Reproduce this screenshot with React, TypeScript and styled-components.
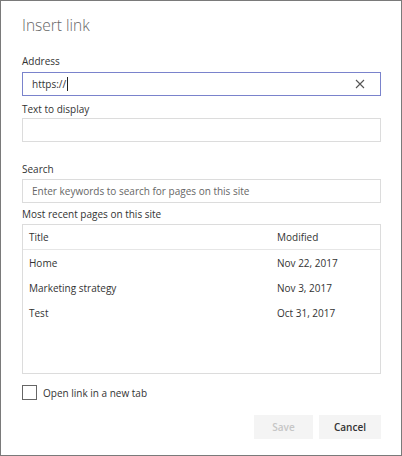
import React from 'react';
import styled, { createGlobalStyle } from 'styled-components';

const GlobalStyle = createGlobalStyle`
  html, body {
    margin: 0;
    padding: 0;
    background: #ffffff;
  }
  * {
    box-sizing: border-box;
  }
`;

const Dialog = styled.div`
  width: 402px;
  height: 456px;
  border: 1px solid #7a7a7a;
  padding: 0 20px 0 21px;
  font-family: "Open Sans", "Noto Sans", sans-serif;
  color: #333333;
  background: #ffffff;
  display: flex;
  flex-direction: column;
`;

const Title = styled.h1`
  margin: 14px 0 0 0;
  font-size: 15.5px;
  line-height: 20px;
  font-weight: 300;
  color: #666666;
`;

const Label = styled.label<{ $top: number; $gap: number }>`
  display: block;
  margin-top: ${p => p.$top}px;
  margin-bottom: ${p => p.$gap}px;
  font-size: 10px;
  line-height: 14px;
  color: #333333;
`;

const InputBox = styled.div<{ $focused?: boolean }>`
  height: 24px;
  border: 1px solid ${p => (p.$focused ? '#7a83cc' : '#dcdcdc')};
  display: flex;
  align-items: center;
  padding: 0 15px 0 9px;
  font-size: 10px;
`;

const Value = styled.span`
  color: #333333;
  flex: 1;
  display: flex;
  align-items: center;
`;

const Caret = styled.span`
  display: inline-block;
  width: 1px;
  height: 14px;
  margin-left: 1px;
  background: #222222;
`;

const Placeholder = styled.span`
  color: #666666;
`;

const ClearButton = styled.span`
  width: 10px;
  height: 10px;
  display: flex;
`;

const Table = styled.div`
  height: 150px;
  border: 1px solid #dcdcdc;
`;

const Row = styled.div<{ $header?: boolean }>`
  display: grid;
  grid-template-columns: 1fr 109px;
  height: ${p => (p.$header ? '25px' : '25px')};
  align-items: center;
  font-size: 10px;
  color: #333333;
  border-bottom: ${p => (p.$header ? '1px solid #e6e6e6' : 'none')};
`;

const Cell = styled.span`
  padding-left: 6px;
`;

const CheckRow = styled.label`
  display: flex;
  align-items: center;
  gap: 6px;
  margin-top: 11px;
  font-size: 10px;
  color: #333333;
`;

const Box = styled.span`
  width: 15px;
  height: 15px;
  border: 1px solid #666666;
`;

const Actions = styled.div`
  display: flex;
  justify-content: flex-end;
  gap: 6px;
  margin-top: 15px;
`;

const Button = styled.button<{ $primary?: boolean; $width: number }>`
  width: ${p => p.$width}px;
  height: 24px;
  border: none;
  background: #f4f4f4;
  font-family: inherit;
  font-size: 10px;
  font-weight: 600;
  color: ${p => (p.$primary ? '#c6c6c6' : '#333333')};
  padding: 0;
`;

const pages = [
  { title: 'Home', modified: 'Nov 22, 2017' },
  { title: 'Marketing strategy', modified: 'Nov 3, 2017' },
  { title: 'Test', modified: 'Oct 31, 2017' },
];

export default function App() {
  return (
    <>
      <GlobalStyle />
      <Dialog>
        <Title>Insert link</Title>

        <Label $top={19} $gap={4}>Address</Label>
        <InputBox $focused>
          <Value>
            https://
            <Caret />
          </Value>
          <ClearButton>
            <svg width="10" height="10" viewBox="0 0 10 10">
              <path d="M1 1 L9 9 M9 1 L1 9" stroke="#555" strokeWidth="1.1" fill="none" />
            </svg>
          </ClearButton>
        </InputBox>

        <Label $top={6} $gap={2}>Text to display</Label>
        <InputBox />

        <Label $top={20} $gap={3}>Search</Label>
        <InputBox>
          <Placeholder>Enter keywords to search for pages on this site</Placeholder>
        </InputBox>

        <Label $top={4} $gap={3}>Most recent pages on this site</Label>
        <Table>
          <Row $header>
            <Cell>Title</Cell>
            <Cell>Modified</Cell>
          </Row>
          {pages.map(p => (
            <Row key={p.title}>
              <Cell>{p.title}</Cell>
              <Cell>{p.modified}</Cell>
            </Row>
          ))}
        </Table>

        <CheckRow>
          <Box />
          Open link in a new tab
        </CheckRow>

        <Actions>
          <Button $primary $width={59}>Save</Button>
          <Button $width={62}>Cancel</Button>
        </Actions>
      </Dialog>
    </>
  );
}
